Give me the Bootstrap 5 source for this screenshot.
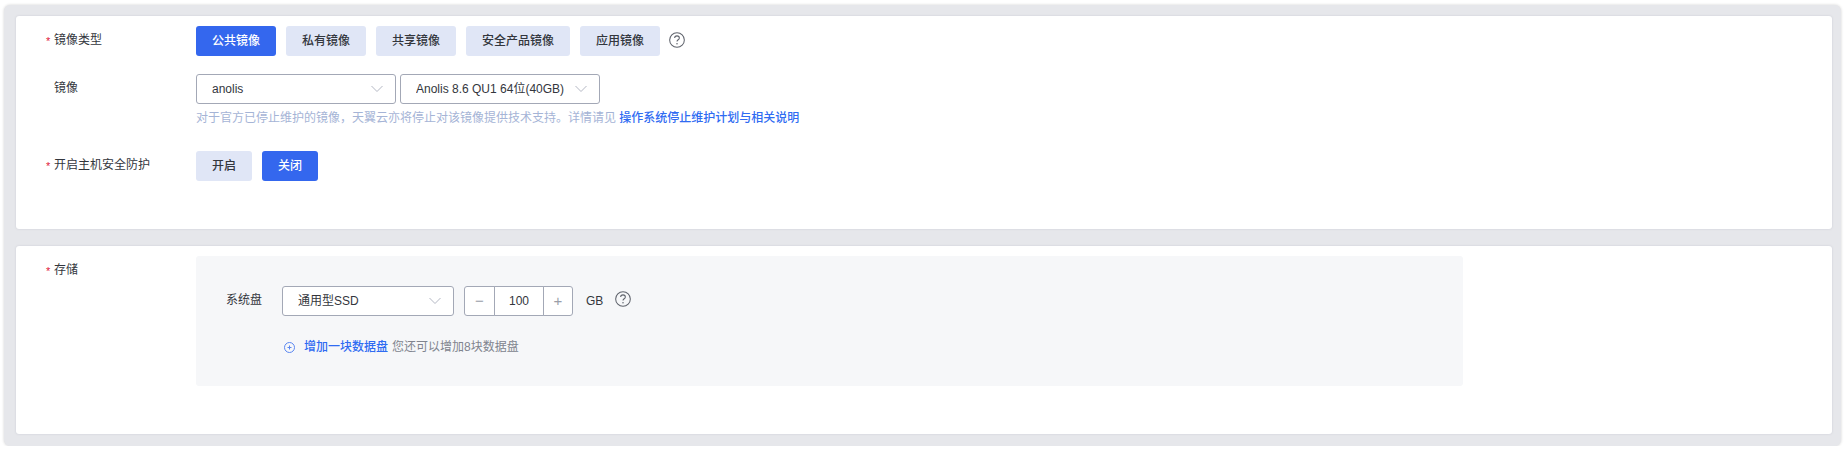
<!DOCTYPE html>
<html lang="zh-CN">
<head>
    <meta charset="UTF-8">
    <meta name="viewport" content="width=device-width, initial-scale=1.0">
    <title>镜像与存储</title>
    <link rel="stylesheet" href="https://cdn.jsdelivr.net/npm/bootstrap@5.3.0/dist/css/bootstrap.min.css">
    <style>
        body { background: #fff; font-family: "Liberation Sans", "Noto Sans CJK SC", sans-serif; font-size: 12px; color: #33363d; overflow: hidden; }
        .frame { margin: 5px 4px 0 4px; height: 441px; padding: 11px 9px 12px 12px; background: #e6e7eb; border-radius: 6px; box-shadow: 0 0 3px rgba(0,0,0,.18); }
        .panel-card { background: #fff; border-radius: 3px; box-shadow: 0 0 2px rgba(110,115,140,.25); }
        .panel-one { height: 213px; padding: 10px 0 0 30px; margin-bottom: 17px; }
        .panel-two { height: 188px; padding: 10px 0 0 30px; }
        .field-label { width: 150px; flex: none; height: 30px; line-height: 28px; padding-left: 8px; position: relative; }
        .field-label.req::before { content: "*"; position: absolute; left: 0; top: 1px; color: #e0203c; font-size: 11px; }
        .opt-group { gap: 10px; }
        .opt-btn { height: 30px; padding: 0; font-size: 12px; font-weight: 500; line-height: 30px; border: 0; border-radius: 3px; background: #e0e6f6; color: #33363d; }
        .opt-btn:hover { background: #d4dcf2; color: #33363d; }
        .opt-btn.on, .opt-btn.on:hover { background: #3467ee; color: #fff; }
        .w-80 { width: 80px; }
        .w-104 { width: 104px; }
        .w-56 { width: 56px; }
        .help-dot { display: block; flex: none; }
        .help-top { margin: 0 0 3px -1px; }
        .help-disk { margin: 5px 0 0 12px; }
        .row-image { margin-top: 18px; }
        .row-guard { margin-top: 24px; }
        .pick { height: 30px; width: 200px; padding: 0 28px 0 15px; font-size: 12px; color: #33363d; line-height: 28px; border: 1px solid #a3a8b6; border-radius: 3px;
            background-color: #fff; background-position: right 10px center; background-size: 16px 10px;
            background-image: url("data:image/svg+xml,%3csvg xmlns='http://www.w3.org/2000/svg' viewBox='0 0 16 10'%3e%3cpath fill='none' stroke='%23b4b8c4' d='M2.500 2l5.500 5.500 5.500-5.500'/%3e%3c/svg%3e"); }
        .note-line { margin-top: 5px; line-height: 18px; color: #a5b4d6; }
        .blue-link { color: #2f6bf2; font-weight: 500; text-decoration: none; }
        .disk-box { width: 1267px; height: 130px; background: #f6f7f9; border-radius: 3px; padding: 30px 0 0 30px; }
        .disk-name { width: 56px; flex: none; line-height: 29px; }
        .pick-disk { width: 172px; height: 30px; }
        .stepper { width: 109px; height: 30px; flex-wrap: nowrap; margin-left: 10px; }
        .stepper .step-btn { width: 31px; padding: 0; border: 1px solid #a3a8b6; background: #fff; color: #9a9ea9; font-size: 15px; line-height: 26px; border-radius: 3px 0 0 3px; }
        .stepper .step-btn.end { width: 30px; border-radius: 0 3px 3px 0; }
        .stepper .form-control { width: 50px; flex: none; padding: 0; font-size: 12px; color: #33363d; text-align: center; border: 1px solid #a3a8b6; border-radius: 0; }
        .gb-unit { margin-left: 13px; line-height: 30px; }
        .add-row { margin: 21px 0 0 56px; height: 20px; line-height: 20px; }
        .add-icon { margin: 0 9px 0 2px; }
        .muted-tip { color: #80848e; }
    </style>
</head>
<body>
<div class="frame">
    <div class="panel-card panel-one">
        <div class="d-flex">
            <div class="field-label req">镜像类型</div>
            <div class="d-flex align-items-center opt-group">
                <button type="button" class="btn opt-btn on w-80">公共镜像</button>
                <button type="button" class="btn opt-btn w-80">私有镜像</button>
                <button type="button" class="btn opt-btn w-80">共享镜像</button>
                <button type="button" class="btn opt-btn w-104">安全产品镜像</button>
                <button type="button" class="btn opt-btn w-80">应用镜像</button>
                <svg class="help-dot help-top" width="16" height="16" viewBox="0 0 17 17"><circle cx="8.500" cy="8.500" r="7.800" fill="none" stroke="#5f636c" stroke-width="1.100"/><path d="M6 6.500c0-1.500 1.100-2.400 2.500-2.400s2.500.9 2.500 2.200c0 2-2.500 1.900-2.500 3.900" fill="none" stroke="#5f636c" stroke-width="1.100"/><circle cx="8.500" cy="12.600" r=".8" fill="#5f636c"/></svg>
            </div>
        </div>
        <div class="d-flex row-image">
            <div class="field-label">镜像</div>
            <div>
                <div class="d-flex gap-1">
                    <select class="form-select pick"><option>anolis</option></select>
                    <select class="form-select pick"><option>Anolis 8.6 QU1 64位(40GB)</option></select>
                </div>
                <div class="note-line">对于官方已停止维护的镜像，天翼云亦将停止对该镜像提供技术支持。详情请见 <a href="#" class="blue-link">操作系统停止维护计划与相关说明</a></div>
            </div>
        </div>
        <div class="d-flex row-guard">
            <div class="field-label req">开启主机安全防护</div>
            <div class="d-flex opt-group">
                <button type="button" class="btn opt-btn w-56">开启</button>
                <button type="button" class="btn opt-btn on w-56">关闭</button>
            </div>
        </div>
    </div>
    <div class="panel-card panel-two">
        <div class="d-flex">
            <div class="field-label req">存储</div>
            <div class="disk-box">
                <div class="d-flex">
                    <div class="disk-name">系统盘</div>
                    <select class="form-select pick pick-disk"><option>通用型SSD</option></select>
                    <div class="input-group stepper">
                        <button type="button" class="btn step-btn">&minus;</button>
                        <input type="text" class="form-control" value="100">
                        <button type="button" class="btn step-btn end">+</button>
                    </div>
                    <span class="gb-unit">GB</span>
                    <svg class="help-dot help-disk" width="16" height="16" viewBox="0 0 17 17"><circle cx="8.500" cy="8.500" r="7.800" fill="none" stroke="#5f636c" stroke-width="1.100"/><path d="M6 6.500c0-1.500 1.100-2.400 2.500-2.400s2.500.9 2.500 2.200c0 2-2.500 1.900-2.500 3.900" fill="none" stroke="#5f636c" stroke-width="1.100"/><circle cx="8.500" cy="12.600" r=".8" fill="#5f636c"/></svg>
                </div>
                <div class="add-row d-flex align-items-center">
                    <svg class="add-icon" width="11" height="11" viewBox="0 0 11 11"><circle cx="5.500" cy="5.500" r="5" fill="none" stroke="#5a86f0"/><path d="M3.500 5.500h4M5.500 3.500v4" stroke="#5a86f0"/></svg>
                    <a href="#" class="blue-link">增加一块数据盘</a>
                    <span class="muted-tip ms-1">您还可以增加8块数据盘</span>
                </div>
            </div>
        </div>
    </div>
</div>
<script src="https://cdn.jsdelivr.net/npm/bootstrap@5.3.0/dist/js/bootstrap.bundle.min.js"></script>
</body>
</html>
